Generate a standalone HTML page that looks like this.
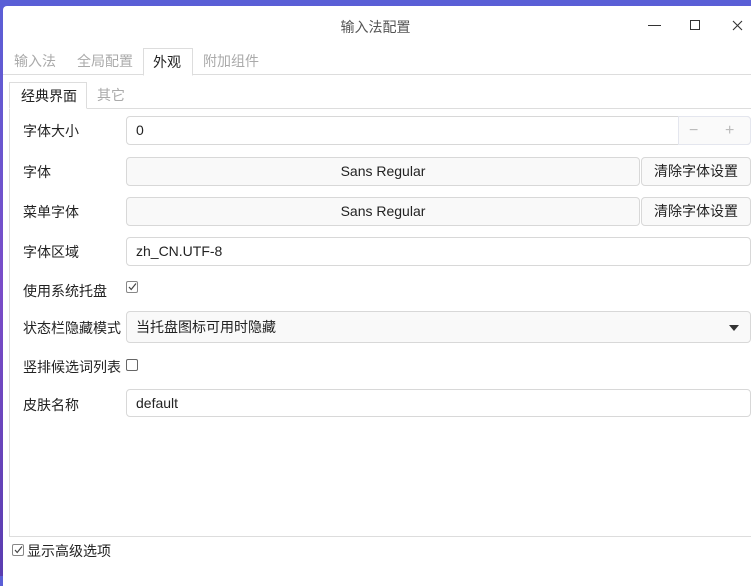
<!DOCTYPE html>
<html><head><meta charset="utf-8"><style>
*{box-sizing:border-box;margin:0;padding:0}
body{width:751px;height:576px;overflow:hidden;position:relative;font-family:"Liberation Sans","Noto Sans CJK SC",sans-serif;font-size:14px;color:#222;background:linear-gradient(180deg,#5a5fd6 0%,#7a4cc8 50%,#5a3db0 100%)}
.a{position:absolute;white-space:nowrap}
#win{left:3px;top:6px;width:760px;height:580px;background:#fff;border-radius:4px 0 0 0}
.title{left:0;top:17px;width:751px;text-align:center;color:#555;font-size:14px}
.tab{top:48px;height:27px;line-height:27px;padding:0 9px;color:#aaa;font-size:14px}
.field{border:1px solid #d8d8d8;border-radius:4px;background:#fff;height:29px;line-height:27px;padding-left:9px;font-size:14px}
.btn{background:#f9f9f9;text-align:center;padding:0}
.lbl{left:23px;font-size:14px;color:#222}
</style></head><body>
<div id="win" class="a"></div>
<div class="a title">输入法配置</div>
<svg class="a" style="left:640px;top:14px" width="111" height="24">
<path d="M8 11.5H21" stroke="#333" stroke-width="1"/>
<rect x="50.5" y="6.5" width="9" height="9" fill="none" stroke="#333"/>
<path d="M93 7L102 16M102 7L93 16" stroke="#333" stroke-width="1.1"/>
</svg>
<div class="a" style="left:3px;top:74px;width:760px;height:1px;background:#ddd"></div>
<div class="a tab" style="left:5px">输入法</div>
<div class="a tab" style="left:68px">全局配置</div>
<div class="a tab" style="left:143px;border:1px solid #ddd;border-bottom:1px solid #fff;background:#fff;color:#222;width:50px;height:28px">外观</div>
<div class="a tab" style="left:194px">附加组件</div>
<div class="a" style="left:9px;top:108px;width:760px;height:429px;border:1px solid #ddd;border-right:none"></div>
<div class="a tab" style="left:9px;top:82px;height:27px;border:1px solid #ddd;border-bottom:1px solid #fff;background:#fff;color:#222;width:78px;padding:0 0 0 11px">经典界面</div>
<div class="a tab" style="left:88px;top:82px">其它</div>

<div class="a lbl" style="top:121px">字体大小</div>
<div class="a field" style="left:126px;top:116px;width:625px">0</div>
<div class="a" style="left:678px;top:116px;width:73px;height:29px;border:1px solid #e4e6ee;border-radius:0 4px 4px 0;background:#fafafa;color:#bbb;font-size:16px;line-height:27px"><span style="position:absolute;left:10px">−</span><span style="position:absolute;left:46px">+</span></div>

<div class="a lbl" style="top:162px">字体</div>
<div class="a field btn" style="left:126px;top:157px;width:514px">Sans Regular</div>
<div class="a field btn" style="left:641px;top:157px;width:110px">清除字体设置</div>

<div class="a lbl" style="top:202px">菜单字体</div>
<div class="a field btn" style="left:126px;top:197px;width:514px">Sans Regular</div>
<div class="a field btn" style="left:641px;top:197px;width:110px">清除字体设置</div>

<div class="a lbl" style="top:242px">字体区域</div>
<div class="a field" style="left:126px;top:237px;width:625px">zh_CN.UTF-8</div>

<div class="a lbl" style="top:281px">使用系统托盘</div>
<svg class="a" style="left:126px;top:281px" width="13" height="13"><rect x="0.5" y="0.5" width="11" height="11" rx="1.5" fill="#fff" stroke="#888"/><path d="M3 6L5.2 8.5L10 2.5" fill="none" stroke="#444" stroke-width="1.2"/></svg>

<div class="a lbl" style="top:318px">状态栏隐藏模式</div>
<div class="a field" style="left:126px;top:311px;width:625px;height:32px;line-height:30px;background:#f9f9f9">当托盘图标可用时隐藏</div>
<div class="a" style="left:729px;top:325px;width:0;height:0;border-left:5px solid transparent;border-right:5px solid transparent;border-top:6px solid #333"></div>

<div class="a lbl" style="top:357px">竖排候选词列表</div>
<svg class="a" style="left:126px;top:359px" width="13" height="13"><rect x="0.5" y="0.5" width="11" height="11" rx="1.5" fill="#fff" stroke="#666"/></svg>

<div class="a lbl" style="top:395px">皮肤名称</div>
<div class="a field" style="left:126px;top:389px;width:625px;height:28px;line-height:26px">default</div>

<svg class="a" style="left:12px;top:544px" width="13" height="13"><rect x="0.5" y="0.5" width="11" height="11" rx="1.5" fill="#fff" stroke="#888"/><path d="M3 6L5.2 8.5L10 2.5" fill="none" stroke="#444" stroke-width="1.2"/></svg>
<div class="a" style="left:27px;top:541px;font-size:14px;color:#222">显示高级选项</div>
</body></html>
